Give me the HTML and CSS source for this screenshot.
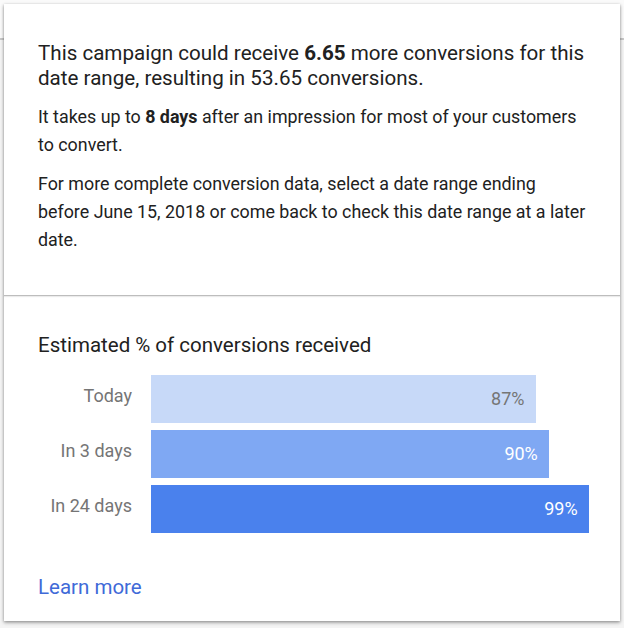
FILE: index.html
```html
<!DOCTYPE html>
<html>
<head>
<meta charset="utf-8">
<link rel="stylesheet" href="styles.css">
</head>
<body>
<div class="card">
  <section class="summary">
    <p class="lead">This campaign could receive <b>6.65</b> more conversions for this date range, resulting in 53.65 conversions.</p>
    <p class="body">It takes up to <b>8 days</b> after an impression for most of your customers to convert.</p>
    <p class="body">For more complete conversion data, select a date range ending before June 15, 2018 or come back to check this date range at a later date.</p>
  </section>
  <section class="estimate">
    <h2 class="title">Estimated % of conversions received</h2>
    <div class="chart">
      <div class="row">
        <span class="label">Today</span>
        <div class="track"><div class="bar bar-light" style="width:87%">87%</div></div>
      </div>
      <div class="row">
        <span class="label">In 3 days</span>
        <div class="track"><div class="bar bar-mid" style="width:90%">90%</div></div>
      </div>
      <div class="row">
        <span class="label">In 24 days</span>
        <div class="track"><div class="bar bar-dark" style="width:99%">99%</div></div>
      </div>
    </div>
    <a class="learn" href="#">Learn more</a>
  </section>
</div>
</body>
</html>
```

FILE: styles.css
```css
* { box-sizing: border-box; }
html, body { margin: 0; padding: 0; }
body {
  width: 624px;
  height: 628px;
  font-family: Roboto, "Noto Sans", sans-serif;
  color: #212121;
  background: linear-gradient(to bottom, #fafafa 0, #fafafa 38px, #c8c8c8 38px, #c8c8c8 40px, #f4f4f4 40px, #f4f4f4 100%);
  padding: 4px 4px 0 4px;
}
.card {
  background: #fff;
  height: 617px;
  box-shadow: 0 1px 3px rgba(0,0,0,0.35), 0 2px 4px rgba(0,0,0,0.15);
  display: flex;
  flex-direction: column;
}
.summary {
  padding: 37px 34px 0 34px;
  height: 292px;
  flex-shrink: 0;
  border-bottom: 1px solid #bdbdbd;
  box-shadow: 0 1px 1px rgba(0,0,0,0.08);
}
.summary p { margin: 0; }
.lead {
  font-size: 20.6px;
  line-height: 25px;
  margin-bottom: 12px !important;
}
.body {
  font-size: 17.85px;
  line-height: 28px;
  margin-bottom: 11px !important;
}
.estimate {
  padding: 37px 34px 0 34px;
  display: flex;
  flex-direction: column;
}
.title {
  margin: 0;
  font-size: 20.5px;
  font-weight: 400;
  line-height: 24px;
}
.chart {
  margin-top: 18px;
  display: flex;
  flex-direction: column;
  gap: 7px;
}
.row {
  display: flex;
  align-items: center;
  height: 48px;
  gap: 19px;
}
.label {
  flex: 0 0 94px;
  text-align: right;
  font-size: 18px;
  color: #757575;
  margin-top: -7px;
  white-space: nowrap;
}
.track {
  flex: 0 0 442px;
  height: 48px;
}
.bar {
  height: 48px;
  display: flex;
  align-items: center;
  justify-content: flex-end;
  padding-right: 11px;
  font-size: 18px;
  padding-bottom: 2px;
}
.bar-light { background: #c7d9f8; color: #757575; }
.bar-mid { background: #7fa8f3; color: #fff; }
.bar-dark { background: #4a81ed; color: #fff; }
.learn {
  margin-top: 42px;
  align-self: flex-start;
  font-size: 20.5px;
  line-height: 24px;
  color: #3f6ad8;
  text-decoration: none;
}
```
